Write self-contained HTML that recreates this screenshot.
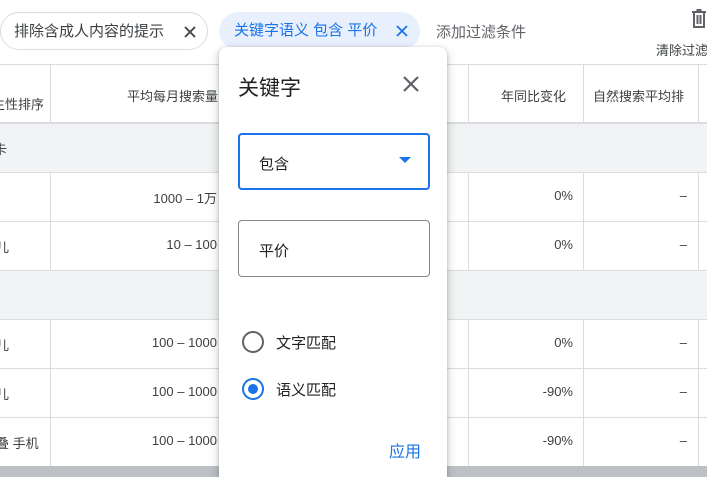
<!DOCTYPE html>
<html><head><meta charset="utf-8"><style>
*{margin:0;padding:0;box-sizing:border-box}
html,body{width:707px;height:477px;overflow:hidden}
body{background:#fff;position:relative;font-family:"Liberation Sans","Noto Sans CJK SC",sans-serif;color:#3c4043}
.abs{position:absolute}
.chip{position:absolute;top:12px;height:38px;border-radius:19px;font-size:15px;line-height:38px;padding-left:13px}
.t{font-size:13px;color:#3c4043;position:absolute;white-space:nowrap}
.r{font-size:13px;color:#3c4043;position:absolute;white-space:nowrap;text-align:right}
.hl{position:absolute;left:0;width:707px;height:1px;background:#dadce0}
.vl{position:absolute;width:1px;background:#dadce0}
.gray{position:absolute;left:0;width:707px;background:#f1f3f4}
</style></head><body>
<div class="chip" style="left:0;width:208px;border:1px solid #dadce0;color:#3c4043">排除含成人内容的提示<svg class="abs" style="left:183px;top:13px" width="12" height="12" viewBox="0 0 12 12"><path d="M1 1L11 11M11 1L1 11" stroke="#3c4043" stroke-width="1.8"/></svg></div>
<div class="chip" style="left:219px;width:201px;background:#e8f0fe;color:#1a73e8;padding-left:15px">关键字语义 包含 平价<svg class="abs" style="left:177px;top:13px" width="12" height="12" viewBox="0 0 12 12"><path d="M1 1L11 11M11 1L1 11" stroke="#1a73e8" stroke-width="1.8"/></svg></div>
<div class="abs" style="left:436px;top:21px;font-size:15px;color:#5f6368">添加过滤条件</div>
<svg class="abs" style="left:691px;top:9px" width="16" height="20" viewBox="0 0 16 20"><path d="M1 3h14M5.5 1h5M3 3v15h10V3M6.5 6v9M9.5 6v9" stroke="#5f6368" stroke-width="2" fill="none"/></svg>
<div class="abs" style="left:656px;top:40px;font-size:13px;color:#3c4043;white-space:nowrap">清除过滤</div>

<div class="hl" style="top:64px"></div>
<div class="hl" style="top:122px;height:2px"></div>
<div class="gray" style="top:124px;height:48px"></div>
<div class="hl" style="top:172px"></div>
<div class="hl" style="top:221px"></div>
<div class="gray" style="top:271px;height:48px"></div>
<div class="hl" style="top:270px"></div>
<div class="hl" style="top:319px"></div>
<div class="hl" style="top:368px"></div>
<div class="hl" style="top:417px"></div>
<div class="abs" style="left:0;top:466px;width:707px;height:11px;background:#bdc1c6"></div>

<div class="vl" style="left:50px;top:64px;height:58px"></div>
<div class="vl" style="left:50px;top:172px;height:98px"></div>
<div class="vl" style="left:50px;top:319px;height:147px"></div>
<div class="vl" style="left:468px;top:64px;height:58px"></div>
<div class="vl" style="left:468px;top:172px;height:98px"></div>
<div class="vl" style="left:468px;top:319px;height:147px"></div>
<div class="vl" style="left:583px;top:64px;height:58px"></div>
<div class="vl" style="left:583px;top:172px;height:98px"></div>
<div class="vl" style="left:583px;top:319px;height:147px"></div>
<div class="vl" style="left:698px;top:64px;height:58px"></div>
<div class="vl" style="left:698px;top:172px;height:98px"></div>
<div class="vl" style="left:698px;top:319px;height:147px"></div>

<div class="t" style="left:-8px;top:94px">生性排序</div>
<div class="t" style="left:127px;top:86px">平均每月搜索量</div>
<div class="t" style="left:501px;top:86px">年同比变化</div>
<div class="t" style="left:593px;top:86px">自然搜索平均排</div>
<div class="t" style="left:-6px;top:139px">卡</div>

<div class="r" style="right:490px;top:188px">1000 – 1万</div>
<div class="r" style="right:490px;top:237px">10 – 100</div>
<div class="r" style="right:490px;top:335px">100 – 1000</div>
<div class="r" style="right:490px;top:384px">100 – 1000</div>
<div class="r" style="right:490px;top:433px">100 – 1000</div>
<div class="t" style="left:-4px;top:237px">儿</div>
<div class="t" style="left:-4px;top:335px">儿</div>
<div class="t" style="left:-4px;top:384px">儿</div>
<div class="t" style="left:-4px;top:433px">叠 手机</div>
<div class="r" style="right:134px;top:188px">0%</div>
<div class="r" style="right:134px;top:237px">0%</div>
<div class="r" style="right:134px;top:335px">0%</div>
<div class="r" style="right:134px;top:384px">-90%</div>
<div class="r" style="right:134px;top:433px">-90%</div>
<div class="r" style="right:20px;top:188px">–</div>
<div class="r" style="right:20px;top:237px">–</div>
<div class="r" style="right:20px;top:335px">–</div>
<div class="r" style="right:20px;top:384px">–</div>
<div class="r" style="right:20px;top:433px">–</div>

<div class="abs" style="left:219px;top:47px;width:228px;height:440px;background:#fff;border-radius:8px;box-shadow:0 1px 3px rgba(60,64,67,.3),0 4px 8px 3px rgba(60,64,67,.15)">
 <div class="abs" style="left:19px;top:25px;font-size:21px;color:#202124">关键字</div>
 <svg class="abs" style="left:184px;top:29px" width="16" height="16" viewBox="0 0 16 16"><path d="M1 1L15 15M15 1L1 15" stroke="#5f6368" stroke-width="2.2"/></svg>
 <div class="abs" style="left:19px;top:86px;width:192px;height:57px;border:2px solid #1a73e8;border-radius:4px">
  <div class="abs" style="left:19px;top:18px;font-size:15px;color:#202124">包含</div>
  <svg class="abs" style="left:159px;top:22px" width="12" height="7" viewBox="0 0 12 7"><path d="M0 0h12L6 6z" fill="#1a73e8"/></svg>
 </div>
 <div class="abs" style="left:19px;top:173px;width:192px;height:57px;border:1px solid #80868b;border-radius:4px">
  <div class="abs" style="left:20px;top:19px;font-size:15px;color:#202124">平价</div>
 </div>
 <div class="abs" style="left:23px;top:284px;width:22px;height:22px;border:2px solid #5f6368;border-radius:50%"></div>
 <div class="abs" style="left:57px;top:285px;font-size:15px;color:#202124">文字匹配</div>
 <div class="abs" style="left:23px;top:331px;width:22px;height:22px;border:2px solid #1a73e8;border-radius:50%"><div class="abs" style="left:4px;top:4px;width:10px;height:10px;border-radius:50%;background:#1a73e8"></div></div>
 <div class="abs" style="left:57px;top:332px;font-size:15px;color:#202124">语义匹配</div>
 <div class="abs" style="left:170px;top:391px;font-size:16px;color:#1a73e8">应用</div>
</div>
</body></html>
